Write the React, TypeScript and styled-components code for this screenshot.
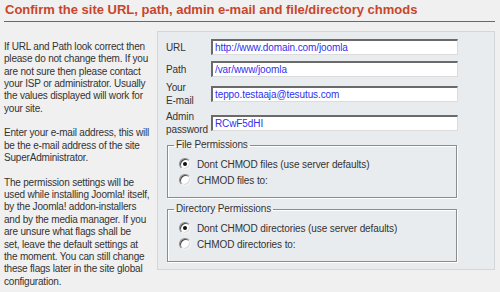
import React from 'react';
import styled, { createGlobalStyle } from 'styled-components';

const GlobalStyle = createGlobalStyle`
  body {
    margin: 0;
    background: #f0f0f0;
    font-family: "Liberation Sans", Arial, sans-serif;
    color: #333;
  }
`;

const Page = styled.div`
  width: 500px;
  height: 292px;
  box-sizing: border-box;
  padding: 0 5px 0 4px;
  overflow: hidden;
`;

const Title = styled.h1`
  margin: 0;
  padding: 3px 0 4px 1px;
  font-size: 13px;
  line-height: 14px;
  font-weight: bold;
  color: #c8452c;
  border-bottom: 1px solid #c8452c;
`;

const Content = styled.div`
  display: flex;
  align-items: flex-start;
  margin-top: 9px;
`;

const Intro = styled.div`
  width: 152px;
  margin-top: 10px;
  font-size: 10px;
  line-height: 12.35px;
  letter-spacing: -0.2px;
  white-space: nowrap;

  p {
    margin: 0 0 12.35px;
  }
`;

const Panel = styled.div`
  margin-left: auto;
  width: 338px;
  box-sizing: border-box;
  padding: 7px 0 7px 8px;
  background: #e9ecef;
  border: 1px solid #d4d6d8;
`;

const Row = styled.div<{ $gap: number }>`
  display: flex;
  align-items: center;
  margin-top: ${({ $gap }) => $gap}px;
`;

const Label = styled.label`
  width: 45px;
  font-size: 10px;
  line-height: 13px;
  letter-spacing: -0.1px;
`;

const Field = styled.input`
  width: 247px;
  height: 16px;
  box-sizing: border-box;
  margin: 0;
  padding: 0 2px;
  background: #fff;
  border-style: solid;
  border-width: 2px 1px 1px 2px;
  border-color: #6a6a6a #dcdcdc #dcdcdc #6a6a6a;
  font-family: "Liberation Sans", Arial, sans-serif;
  font-size: 10px;
  letter-spacing: -0.1px;
  color: #3030f0;
  outline: none;
`;

const Group = styled.fieldset<{ $gap: number }>`
  width: 290px;
  box-sizing: border-box;
  margin: ${({ $gap }) => $gap}px 0 0 1px;
  padding: 5px 0 9px 6px;
  border: 1px solid #8c8c8c;
  box-shadow: inset 1px 1px 0 #fff, 1px 1px 0 #fff;
`;

const Legend = styled.legend`
  padding: 0 2px;
  font-size: 10px;
  line-height: 12px;
  letter-spacing: -0.1px;
`;

const Option = styled.div`
  display: flex;
  align-items: center;
  gap: 6px;
  height: 16px;
  margin-left: 5px;
  font-size: 10px;
  letter-spacing: -0.1px;
`;

const Radio = styled.span<{ $on?: boolean }>`
  position: relative;
  width: 12px;
  height: 12px;
  box-sizing: border-box;
  border-radius: 50%;
  background: #fff;
  border: 1px solid;
  border-color: #8a8a8a #f4f4f4 #f4f4f4 #8a8a8a;
  box-shadow: inset 1px 1px 0 #4a4a4a, inset -1px -1px 0 #d8d8d8;

  &::after {
    content: '';
    display: ${({ $on }) => ($on ? 'block' : 'none')};
    position: absolute;
    left: 3px;
    top: 3px;
    width: 4px;
    height: 4px;
    border-radius: 50%;
    background: #111;
  }
`;

const App: React.FC = () => (
  <Page>
    <GlobalStyle />
    <Title>Confirm the site URL, path, admin e-mail and file/directory chmods</Title>
    <Content>
      <Intro>
        <p>
          If URL and Path look correct then<br />
          please do not change them. If you<br />
          are not sure then please contact<br />
          your ISP or administrator. Usually<br />
          the values displayed will work for<br />
          your site.
        </p>
        <p>
          Enter your e-mail address, this will<br />
          be the e-mail address of the site<br />
          SuperAdministrator.
        </p>
        <p>
          The permission settings will be<br />
          used while installing Joomla! itself,<br />
          by the Joomla! addon-installers<br />
          and by the media manager. If you<br />
          are unsure what flags shall be<br />
          set, leave the default settings at<br />
          the moment. You can still change<br />
          these flags later in the site global<br />
          configuration.
        </p>
      </Intro>
      <Panel>
        <Row $gap={0}>
          <Label htmlFor="url">URL</Label>
          <Field id="url" readOnly defaultValue="http://www.domain.com/joomla" />
        </Row>
        <Row $gap={6}>
          <Label htmlFor="path">Path</Label>
          <Field id="path" readOnly defaultValue="/var/www/joomla" />
        </Row>
        <Row $gap={4}>
          <Label htmlFor="mail">
            Your
            <br />
            E-mail
          </Label>
          <Field id="mail" readOnly defaultValue="teppo.testaaja@tesutus.com" />
        </Row>
        <Row $gap={3}>
          <Label htmlFor="pass">
            Admin
            <br />
            password
          </Label>
          <Field id="pass" readOnly defaultValue="RCwF5dHI" />
        </Row>

        <Group $gap={3}>
          <Legend>File Permissions</Legend>
          <Option>
            <Radio $on />
            Dont CHMOD files (use server defaults)
          </Option>
          <Option>
            <Radio />
            CHMOD files to:
          </Option>
        </Group>

        <Group $gap={5}>
          <Legend>Directory Permissions</Legend>
          <Option>
            <Radio $on />
            Dont CHMOD directories (use server defaults)
          </Option>
          <Option>
            <Radio />
            CHMOD directories to:
          </Option>
        </Group>
      </Panel>
    </Content>
  </Page>
);

export default App;
